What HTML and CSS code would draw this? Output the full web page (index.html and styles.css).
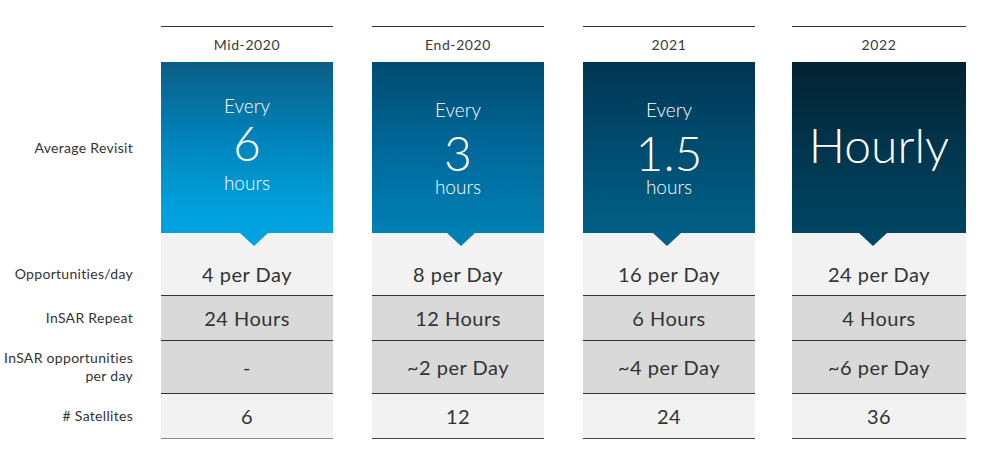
FILE: index.html
```html
<!DOCTYPE html>
<html>
<head>
<meta charset="utf-8">
<link rel="stylesheet" href="styles.css">
</head>
<body>
<div class="grid">
  <div class="head c1">Mid-2020</div>
  <div class="head c2">End-2020</div>
  <div class="head c3">2021</div>
  <div class="head c4">2022</div>

  <div class="label r-box">Average Revisit</div>
  <div class="box c1 b1"><span class="small">Every</span><span class="big">6</span><span class="small after">hours</span></div>
  <div class="box c2 b2"><span class="small">Every</span><span class="big">3</span><span class="small after">hours</span></div>
  <div class="box c3 b3"><span class="small">Every</span><span class="big">1.5</span><span class="small after">hours</span></div>
  <div class="box c4 b4"><span class="huge">Hourly</span></div>

  <div class="label r-opp">Opportunities/day</div>
  <div class="cell light first c1">4 per Day</div>
  <div class="cell light first c2">8 per Day</div>
  <div class="cell light first c3">16 per Day</div>
  <div class="cell light first c4">24 per Day</div>

  <div class="label r-rep">InSAR Repeat</div>
  <div class="cell dark c1">24 Hours</div>
  <div class="cell dark c2">12 Hours</div>
  <div class="cell dark c3">6 Hours</div>
  <div class="cell dark c4">4 Hours</div>

  <div class="label r-ins">InSAR opportunities<br>per day</div>
  <div class="cell dark c1">-</div>
  <div class="cell dark c2">~2 per Day</div>
  <div class="cell dark c3">~4 per Day</div>
  <div class="cell dark c4">~6 per Day</div>

  <div class="label r-sat"># Satellites</div>
  <div class="cell light last c1">6</div>
  <div class="cell light last c2">12</div>
  <div class="cell light last c3">24</div>
  <div class="cell light last c4">36</div>
</div>
</body>
</html>
```
FILE: styles.css
```css
html, body {
  margin: 0;
  padding: 0;
  background: #ffffff;
}
body {
  font-family: Lato, "Liberation Sans", sans-serif;
  color: #333333;
}
.grid {
  display: grid;
  grid-template-columns: 133px 28px 172px 39px 172px 39px 172px 37px 174px;
  grid-template-rows: 36px 171px 62px 45px 53px 46px;
  padding-top: 26px;
}
.c1 { grid-column: 3; }
.c2 { grid-column: 5; }
.c3 { grid-column: 7; }
.c4 { grid-column: 9; }

.head {
  grid-row: 1;
  border-top: 1px solid #333333;
  display: flex;
  align-items: center;
  justify-content: center;
  font-size: 14px;
  letter-spacing: 0.6px;
  color: #3a3a3a;
}
.label {
  grid-column: 1;
  display: flex;
  align-items: center;
  justify-content: flex-end;
  text-align: right;
  font-size: 14px;
  line-height: 18px;
  letter-spacing: 0.3px;
  color: #333333;
}
.r-box { grid-row: 2; }
.r-opp { grid-row: 3; padding-top: 20px; }
.r-rep { grid-row: 4; }
.r-ins { grid-row: 5; }
.r-sat { grid-row: 6; }

.box {
  grid-row: 2;
  position: relative;
  display: flex;
  flex-direction: column;
  align-items: center;
  justify-content: flex-start;
  padding-top: 36px;
  box-sizing: border-box;
  color: #ffffff;
  font-weight: 300;
}
.box::after {
  content: "";
  position: absolute;
  top: 100%;
  left: calc(50% + var(--shift));
  margin-left: -14px;
  border-left: 14px solid transparent;
  border-right: 14px solid transparent;
  border-top: 13px solid var(--tip);
  z-index: 2;
}
.b1 {
  background: linear-gradient(180deg, #0b5e85 0%, #0083bb 45%, #00a0dc 85%, #00a2de 100%);
  --tip: #00a1dd;
  --shift: 7px;
  padding-top: 31.5px;
}
.b2 {
  background: linear-gradient(180deg, #004a6f 0%, #00689a 50%, #0080b4 100%);
  --tip: #0080b4;
  --shift: 3px;
}
.b3 {
  background: linear-gradient(180deg, #003552 0%, #004c70 50%, #005f86 100%);
  --tip: #005f86;
  --shift: -2px;
}
.b4 {
  background: linear-gradient(180deg, #012231 0%, #01354d 50%, #004562 100%);
  --tip: #004562;
  --shift: -6px;
  justify-content: center;
  padding-top: 0;
}

.small {
  font-size: 19px;
  line-height: 24px;
}
.big {
  font-size: 48px;
  line-height: 46px;
  margin-top: 7.5px;
}
.after {
  margin-top: -1px;
}
.b1 .big { margin-top: 2px; }
.b1 .after { margin-top: 5px; }
.huge {
  font-size: 48px;
  line-height: 56px;
  margin-bottom: 5px;
}

.cell {
  display: flex;
  align-items: center;
  justify-content: center;
  font-size: 20px;
  letter-spacing: 0.5px;
  color: #333333;
  border-top: 1px solid #333333;
  box-sizing: border-box;
}
.light { background: #f2f2f2; }
.dark { background: #d9d9d9; }
.first {
  border-top: none;
  padding-top: 20px;
}
.last {
  border-bottom: 1px solid #444444;
}
.c1.last {
  border-bottom-color: #8c8c8c;
}
```
